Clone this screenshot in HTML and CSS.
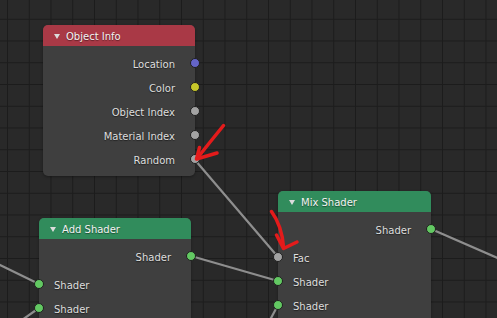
FILE: index.html
```html
<!DOCTYPE html>
<html>
<head>
<meta charset="utf-8">
<link rel="stylesheet" href="styles.css">
</head>
<body>
<div class="canvas">
  <svg class="wires" width="497" height="318" viewBox="0 0 497 318">
    <g stroke="#8e8e8e" stroke-width="2.2" stroke-linecap="round" fill="none">
      <line x1="195" y1="160" x2="278" y2="257"/>
      <line x1="191" y1="256" x2="278" y2="281"/>
      <line x1="431" y1="229" x2="500" y2="259"/>
      <line x1="-2" y1="264" x2="39" y2="284"/>
      <line x1="39" y1="308" x2="22" y2="320"/>
      <line x1="278" y1="305" x2="270" y2="320"/>
    </g>
  </svg>

  <div class="node n-info">
    <div class="hdr hdr-red"><span class="tri"></span><span class="title">Object Info</span></div>
    <div class="body">
      <div class="row out"><span class="lbl">Location</span><span class="sock s-blue"></span></div>
      <div class="row out"><span class="lbl">Color</span><span class="sock s-yellow"></span></div>
      <div class="row out"><span class="lbl">Object Index</span><span class="sock s-gray"></span></div>
      <div class="row out"><span class="lbl">Material Index</span><span class="sock s-gray"></span></div>
      <div class="row out"><span class="lbl">Random</span><span class="sock s-gray"></span></div>
    </div>
  </div>

  <div class="node n-add">
    <div class="hdr hdr-green"><span class="tri"></span><span class="title">Add Shader</span></div>
    <div class="body">
      <div class="row out"><span class="lbl">Shader</span><span class="sock s-green"></span></div>
      <div class="row in gap"><span class="sock s-green"></span><span class="lbl">Shader</span></div>
      <div class="row in"><span class="sock s-green"></span><span class="lbl">Shader</span></div>
    </div>
  </div>

  <div class="node n-mix">
    <div class="hdr hdr-green"><span class="tri"></span><span class="title">Mix Shader</span></div>
    <div class="body">
      <div class="row out"><span class="lbl">Shader</span><span class="sock s-green"></span></div>
      <div class="row in gap"><span class="sock s-gray"></span><span class="lbl">Fac</span></div>
      <div class="row in"><span class="sock s-green"></span><span class="lbl">Shader</span></div>
      <div class="row in"><span class="sock s-green"></span><span class="lbl">Shader</span></div>
    </div>
  </div>

  <svg class="marks" width="497" height="318" viewBox="0 0 497 318">
    <g stroke="#e41b1b" stroke-width="3.5" stroke-linecap="round" stroke-linejoin="round" fill="none">
      <path d="M223.5 125.5 Q210 142 197 158.5"/>
      <path d="M199.5 147.5 L196.5 159 L217 153"/>
      <path d="M271.5 211.5 Q282 226 283.5 247"/>
      <path d="M276.5 235 L283.5 248.5 L297 242"/>
    </g>
  </svg>
</div>
</body>
</html>
```

FILE: styles.css
```css
html, body {
  margin: 0;
  padding: 0;
  background: #292929;
}

.canvas {
  position: relative;
  width: 497px;
  height: 318px;
  overflow: hidden;
  background-color: #292929;
  background-image:
    linear-gradient(to right, #1c1c1c 0, #1c1c1c 1px, transparent 1px),
    linear-gradient(to bottom, #1c1c1c 0, #1c1c1c 1px, transparent 1px);
  background-size: 21.75px 21.75px;
  background-position: 7px -3px;
  font-family: "DejaVu Sans", "Liberation Sans", sans-serif;
  font-size: 10px;
}

.wires, .marks {
  position: absolute;
  left: 0;
  top: 0;
}

.marks {
  z-index: 5;
}

.node {
  position: absolute;
  background: #3f3f3f;
  border-radius: 5px;
  box-shadow: 0 1px 3px rgba(0, 0, 0, 0.35);
  z-index: 2;
}

.n-info { left: 43px; top: 25px; width: 152px; }
.n-add  { left: 39px; top: 218px; width: 152px; }
.n-mix  { left: 278px; top: 191px; width: 153px; }

.hdr {
  box-sizing: border-box;
  height: 21px;
  padding-top: 2px;
  display: flex;
  align-items: center;
  border-radius: 5px 5px 0 0;
  color: #f2f2f2;
  text-shadow: 0 1px 1px rgba(0, 0, 0, 0.45);
}

.hdr-red { background: #a93946; }
.hdr-green { background: #318c5c; }

.tri {
  width: 0;
  height: 0;
  margin-left: 10.5px;
  border-left: 3.5px solid transparent;
  border-right: 3.5px solid transparent;
  border-top: 5px solid #dcdcdc;
}

.title {
  margin-left: 6.5px;
}

.body {
  padding: 5px 0 5px;
}

.row {
  position: relative;
  box-sizing: border-box;
  height: 24px;
  display: flex;
  align-items: center;
  padding: 2px 20px 0 15px;
  color: #dedede;
  text-shadow: 0 1px 1px rgba(0, 0, 0, 0.5);
}

.row.out { justify-content: flex-end; }
.row.gap { margin-top: 4px; }

.sock {
  position: absolute;
  top: 7px;
  width: 10px;
  height: 10px;
  border-radius: 50%;
  box-sizing: border-box;
  border: 1px solid #1f1f1f;
}

.out .sock { right: -5px; }
.in .sock { left: -5px; }

.s-blue { background: #6464c8; }
.s-yellow { background: #c8c82a; }
.s-gray { background: #a2a2a2; }
.s-green { background: #62c862; }
```
